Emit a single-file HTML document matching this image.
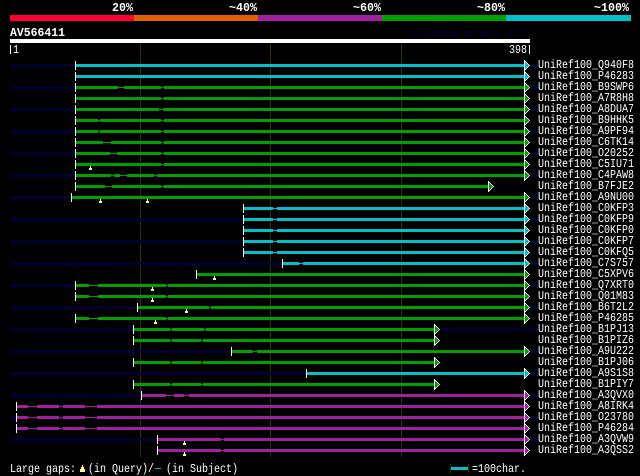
<!DOCTYPE html>
<html><head><meta charset="utf-8"><style>
html,body{margin:0;padding:0;background:#000;width:640px;height:476px;overflow:hidden}
svg{display:block}
text{font-family:"Liberation Mono",monospace;font-size:12px;fill:#fff}
.b{font-weight:bold}
</style></head><body>
<svg width="640" height="476" viewBox="0 0 640 476" shape-rendering="crispEdges" xmlns="http://www.w3.org/2000/svg">
<defs>
<rect id="t" x="0" y="-3" width="1" height="9" fill="#fff"/>
<g id="m"><rect x="1" y="3" width="1" height="2" fill="#ffff80"/><rect x="0" y="5" width="3" height="2" fill="#ffff80"/></g>
<g id="a">
<path fill="#fff" d="M0 -4h1v11h-1zM1 -3h1v1h-1zM1 5h1v1h-1zM2 -2h1v1h-1zM2 4h1v1h-1zM3 -1h1v1h-1zM3 3h1v1h-1zM4 0h1v1h-1zM4 2h1v1h-1zM5 1h1v1h-1z"/>
<path d="M1 -2h1v7h-1zM2 -1h1v5h-1zM3 0h1v3h-1zM4 1h1v1h-1z"/>
</g>
</defs>
<rect x="10" y="15" width="124" height="6" fill="#ff0033"/>
<rect x="134" y="15" width="124" height="6" fill="#e06000"/>
<rect x="258" y="15" width="124" height="6" fill="#a020a0"/>
<rect x="382" y="15" width="124" height="6" fill="#00a000"/>
<rect x="506" y="15" width="125" height="6" fill="#00c0c8"/>
<text class="b" x="112" y="11" textLength="21" lengthAdjust="spacingAndGlyphs">20%</text>
<text class="b" x="229" y="11" textLength="28" lengthAdjust="spacingAndGlyphs">~40%</text>
<text class="b" x="353" y="11" textLength="28" lengthAdjust="spacingAndGlyphs">~60%</text>
<text class="b" x="477" y="11" textLength="28" lengthAdjust="spacingAndGlyphs">~80%</text>
<text class="b" x="594" y="11" textLength="35" lengthAdjust="spacingAndGlyphs">~100%</text>
<text class="b" x="10" y="36" textLength="55" lengthAdjust="spacingAndGlyphs">AV566411</text>
<text x="414" y="37" textLength="115" lengthAdjust="spacingAndGlyphs" style="fill:#000033">AlignView.pm Beta rel.7</text>
<rect x="10" y="39" width="520" height="4" fill="#fff"/>
<rect x="10" y="45" width="1" height="9" fill="#fff"/>
<text x="13" y="53" textLength="6" lengthAdjust="spacingAndGlyphs">1</text>
<text x="509" y="53" textLength="18" lengthAdjust="spacingAndGlyphs">398</text>
<rect x="529" y="45" width="1" height="9" fill="#fff"/>
<rect x="140" y="44" width="1" height="413" fill="#333300"/>
<rect x="270" y="44" width="1" height="413" fill="#333300"/>
<rect x="401" y="44" width="1" height="413" fill="#333300"/>

<g shape-rendering="geometricPrecision">
<g fill="#000033">
<path d="M10 64h65v3h-65zM530 64h8v3h-8zM10 86h65v3h-65zM530 86h8v3h-8zM10 108h65v3h-65zM530 108h8v3h-8zM10 130h65v3h-65zM530 130h8v3h-8zM10 152h65v3h-65zM530 152h8v3h-8zM10 174h65v3h-65zM530 174h8v3h-8zM10 196h61v3h-61zM530 196h8v3h-8zM10 218h233v3h-233zM530 218h8v3h-8zM10 240h233v3h-233zM530 240h8v3h-8zM10 262h272v3h-272zM530 262h8v3h-8zM10 284h65v3h-65zM530 284h8v3h-8zM10 306h127v3h-127zM530 306h8v3h-8zM10 328h123v3h-123zM440 328h98v3h-98zM10 350h221v3h-221zM530 350h8v3h-8zM10 372h296v3h-296zM530 372h8v3h-8zM10 394h131v3h-131zM530 394h8v3h-8zM10 416h6v3h-6zM530 416h8v3h-8zM10 438h147v3h-147zM530 438h8v3h-8z"/>
</g>

<!-- cyan -->
<g fill="#00c0c8">
<path d="M76 64h448v3h-448zM76 75h448v3h-448z"/>
<path d="M244 207h29v3h-29zM273 208h4v1h-4zM277 207h247v3h-247zM244 218h29v3h-29zM273 219h4v1h-4zM277 218h247v3h-247zM244 229h29v3h-29zM273 230h4v1h-4zM277 229h247v3h-247zM244 240h29v3h-29zM273 241h4v1h-4zM277 240h247v3h-247zM244 251h29v3h-29zM273 252h4v1h-4zM277 251h247v3h-247z"/>
<path d="M283 262h16v3h-16zM299 263h4v1h-4zM303 262h221v3h-221zM307 372h217v3h-217z"/>
</g>
<!-- green -->
<g fill="#00a000">
<path d="M76 86h42v3h-42zM118 87h6v1h-6zM124 86h37v3h-37zM161 87h3v1h-3zM164 86h360v3h-360z"/>
<path d="M76 97h85v3h-85zM161 98h3v1h-3zM164 97h360v3h-360z"/>
<path d="M76 108h83v3h-83zM159 109h4v1h-4zM163 108h361v3h-361z"/>
<path d="M76 119h22v3h-22zM98 120h2v1h-2zM100 119h61v3h-61zM161 120h3v1h-3zM164 119h360v3h-360z"/>
<path d="M76 130h22v3h-22zM98 131h2v1h-2zM100 130h61v3h-61zM161 131h3v1h-3zM164 130h360v3h-360z"/>
<path d="M76 141h27v3h-27zM103 142h8v1h-8zM111 141h50v3h-50zM161 142h3v1h-3zM164 141h360v3h-360z"/>
<path d="M76 152h34v3h-34zM110 153h7v1h-7zM117 152h44v3h-44zM161 153h3v1h-3zM164 152h360v3h-360z"/>
<path d="M76 163h85v3h-85zM161 164h3v1h-3zM164 163h360v3h-360z"/>
<path d="M76 174h35v3h-35zM111 175h3v1h-3zM114 174h6v3h-6zM120 175h7v1h-7zM127 174h27v3h-27zM154 175h3v1h-3zM157 174h367v3h-367z"/>
<path d="M76 185h29v3h-29zM105 186h7v1h-7zM112 185h49v3h-49zM161 186h3v1h-3zM164 185h324v3h-324z"/>
<path d="M72 196h452v3h-452z"/>
<path d="M197 273h327v3h-327z"/>
<path d="M76 284h13v3h-13zM89 285h9v1h-9zM98 284h68v3h-68zM166 285h2v1h-2zM168 284h356v3h-356z"/>
<path d="M76 295h13v3h-13zM89 296h9v1h-9zM98 295h68v3h-68zM166 296h2v1h-2zM168 295h356v3h-356z"/>
<path d="M138 306h71v3h-71zM209 307h2v1h-2zM211 306h313v3h-313z"/>
<path d="M76 317h13v3h-13zM89 318h9v1h-9zM98 317h68v3h-68zM166 318h2v1h-2zM168 317h356v3h-356z"/>
<path d="M134 328h36v3h-36zM170 329h2v1h-2zM172 328h32v3h-32zM204 329h2v1h-2zM206 328h228v3h-228z"/>
<path d="M134 339h36v3h-36zM170 340h2v1h-2zM172 339h29v3h-29zM201 340h2v1h-2zM203 339h231v3h-231z"/>
<path d="M232 350h21v3h-21zM253 351h4v1h-4zM257 350h267v3h-267z"/>
<path d="M134 361h36v3h-36zM170 362h2v1h-2zM172 361h29v3h-29zM201 362h2v1h-2zM203 361h231v3h-231z"/>
<path d="M134 383h36v3h-36zM170 384h2v1h-2zM172 383h29v3h-29zM201 384h2v1h-2zM203 383h231v3h-231z"/>
</g>
<!-- magenta -->
<g fill="#a020a0">
<path d="M142 394h24v3h-24zM166 395h8v1h-8zM174 394h10v3h-10zM184 395h5v1h-5zM189 394h335v3h-335z"/>
<path d="M17 405h11v3h-11zM28 406h9v1h-9zM37 405h22v3h-22zM59 406h4v1h-4zM63 405h22v3h-22zM85 406h12v1h-12zM97 405h427v3h-427z"/>
<path d="M17 416h11v3h-11zM28 417h9v1h-9zM37 416h22v3h-22zM59 417h4v1h-4zM63 416h22v3h-22zM85 417h12v1h-12zM97 416h427v3h-427z"/>
<path d="M17 427h11v3h-11zM28 428h9v1h-9zM37 427h22v3h-22zM59 428h4v1h-4zM63 427h22v3h-22zM85 428h12v1h-12zM97 427h427v3h-427z"/>
<path d="M158 438h63v3h-63zM221 439h3v1h-3zM224 438h300v3h-300z"/>
<path d="M158 449h63v3h-63zM221 450h3v1h-3zM224 449h300v3h-300z"/>
</g>
</g>

<!-- ticks -->
<use href="#t" x="75" y="64"/><use href="#t" x="75" y="75"/><use href="#t" x="75" y="86"/><use href="#t" x="75" y="97"/><use href="#t" x="75" y="108"/><use href="#t" x="75" y="119"/><use href="#t" x="75" y="130"/><use href="#t" x="75" y="141"/><use href="#t" x="75" y="152"/><use href="#t" x="75" y="163"/><use href="#t" x="75" y="174"/><use href="#t" x="75" y="185"/>
<use href="#t" x="71" y="196"/>
<use href="#t" x="243" y="207"/><use href="#t" x="243" y="218"/><use href="#t" x="243" y="229"/><use href="#t" x="243" y="240"/><use href="#t" x="243" y="251"/>
<use href="#t" x="282" y="262"/><use href="#t" x="196" y="273"/><use href="#t" x="75" y="284"/><use href="#t" x="75" y="295"/><use href="#t" x="137" y="306"/><use href="#t" x="75" y="317"/>
<use href="#t" x="133" y="328"/><use href="#t" x="133" y="339"/><use href="#t" x="231" y="350"/><use href="#t" x="133" y="361"/><use href="#t" x="306" y="372"/><use href="#t" x="133" y="383"/>
<use href="#t" x="141" y="394"/><use href="#t" x="16" y="405"/><use href="#t" x="16" y="416"/><use href="#t" x="16" y="427"/><use href="#t" x="157" y="438"/><use href="#t" x="157" y="449"/>

<!-- markers -->
<use href="#m" x="89" y="163"/><use href="#m" x="99" y="196"/><use href="#m" x="146" y="196"/><use href="#m" x="213" y="273"/><use href="#m" x="151" y="284"/><use href="#m" x="151" y="295"/><use href="#m" x="185" y="306"/><use href="#m" x="154" y="317"/><use href="#m" x="183" y="438"/><use href="#m" x="183" y="449"/>

<!-- arrows -->
<g fill="#00c0c8">
<use href="#a" x="524" y="64"/><use href="#a" x="524" y="75"/><use href="#a" x="524" y="207"/><use href="#a" x="524" y="218"/><use href="#a" x="524" y="229"/><use href="#a" x="524" y="240"/><use href="#a" x="524" y="251"/><use href="#a" x="524" y="262"/><use href="#a" x="524" y="372"/>
</g>
<g fill="#00a000">
<use href="#a" x="524" y="86"/><use href="#a" x="524" y="97"/><use href="#a" x="524" y="108"/><use href="#a" x="524" y="119"/><use href="#a" x="524" y="130"/><use href="#a" x="524" y="141"/><use href="#a" x="524" y="152"/><use href="#a" x="524" y="163"/><use href="#a" x="524" y="174"/><use href="#a" x="488" y="185"/><use href="#a" x="524" y="196"/><use href="#a" x="524" y="273"/><use href="#a" x="524" y="284"/><use href="#a" x="524" y="295"/><use href="#a" x="524" y="306"/><use href="#a" x="524" y="317"/><use href="#a" x="434" y="328"/><use href="#a" x="434" y="339"/><use href="#a" x="524" y="350"/><use href="#a" x="434" y="361"/><use href="#a" x="434" y="383"/>
</g>
<g fill="#a020a0">
<use href="#a" x="524" y="394"/><use href="#a" x="524" y="405"/><use href="#a" x="524" y="416"/><use href="#a" x="524" y="427"/><use href="#a" x="524" y="438"/><use href="#a" x="524" y="449"/>
</g>

<!-- labels -->
<g text-rendering="geometricPrecision">
<text x="538" y="68" textLength="96" lengthAdjust="spacingAndGlyphs">UniRef100_Q940F8</text>
<text x="538" y="79" textLength="96" lengthAdjust="spacingAndGlyphs">UniRef100_P46283</text>
<text x="538" y="90" textLength="96" lengthAdjust="spacingAndGlyphs">UniRef100_B9SWP6</text>
<text x="538" y="101" textLength="96" lengthAdjust="spacingAndGlyphs">UniRef100_A7R8H8</text>
<text x="538" y="112" textLength="96" lengthAdjust="spacingAndGlyphs">UniRef100_A8DUA7</text>
<text x="538" y="123" textLength="96" lengthAdjust="spacingAndGlyphs">UniRef100_B9HHK5</text>
<text x="538" y="134" textLength="96" lengthAdjust="spacingAndGlyphs">UniRef100_A9PF94</text>
<text x="538" y="145" textLength="96" lengthAdjust="spacingAndGlyphs">UniRef100_C6TK14</text>
<text x="538" y="156" textLength="96" lengthAdjust="spacingAndGlyphs">UniRef100_O20252</text>
<text x="538" y="167" textLength="96" lengthAdjust="spacingAndGlyphs">UniRef100_C5IU71</text>
<text x="538" y="178" textLength="96" lengthAdjust="spacingAndGlyphs">UniRef100_C4PAW8</text>
<text x="538" y="189" textLength="96" lengthAdjust="spacingAndGlyphs">UniRef100_B7FJE2</text>
<text x="538" y="200" textLength="96" lengthAdjust="spacingAndGlyphs">UniRef100_A9NU00</text>
<text x="538" y="211" textLength="96" lengthAdjust="spacingAndGlyphs">UniRef100_C0KFP3</text>
<text x="538" y="222" textLength="96" lengthAdjust="spacingAndGlyphs">UniRef100_C0KFP9</text>
<text x="538" y="233" textLength="96" lengthAdjust="spacingAndGlyphs">UniRef100_C0KFP0</text>
<text x="538" y="244" textLength="96" lengthAdjust="spacingAndGlyphs">UniRef100_C0KFP7</text>
<text x="538" y="255" textLength="96" lengthAdjust="spacingAndGlyphs">UniRef100_C0KFQ5</text>
<text x="538" y="266" textLength="96" lengthAdjust="spacingAndGlyphs">UniRef100_C7S757</text>
<text x="538" y="277" textLength="96" lengthAdjust="spacingAndGlyphs">UniRef100_C5XPV6</text>
<text x="538" y="288" textLength="96" lengthAdjust="spacingAndGlyphs">UniRef100_Q7XRT0</text>
<text x="538" y="299" textLength="96" lengthAdjust="spacingAndGlyphs">UniRef100_Q01M83</text>
<text x="538" y="310" textLength="96" lengthAdjust="spacingAndGlyphs">UniRef100_B6T2L2</text>
<text x="538" y="321" textLength="96" lengthAdjust="spacingAndGlyphs">UniRef100_P46285</text>
<text x="538" y="332" textLength="96" lengthAdjust="spacingAndGlyphs">UniRef100_B1PJ13</text>
<text x="538" y="343" textLength="96" lengthAdjust="spacingAndGlyphs">UniRef100_B1PIZ6</text>
<text x="538" y="354" textLength="96" lengthAdjust="spacingAndGlyphs">UniRef100_A9U222</text>
<text x="538" y="365" textLength="96" lengthAdjust="spacingAndGlyphs">UniRef100_B1PJ06</text>
<text x="538" y="376" textLength="96" lengthAdjust="spacingAndGlyphs">UniRef100_A9S1S8</text>
<text x="538" y="387" textLength="96" lengthAdjust="spacingAndGlyphs">UniRef100_B1PIY7</text>
<text x="538" y="398" textLength="96" lengthAdjust="spacingAndGlyphs">UniRef100_A3QVX0</text>
<text x="538" y="409" textLength="96" lengthAdjust="spacingAndGlyphs">UniRef100_A8IRK4</text>
<text x="538" y="420" textLength="96" lengthAdjust="spacingAndGlyphs">UniRef100_O23780</text>
<text x="538" y="431" textLength="96" lengthAdjust="spacingAndGlyphs">UniRef100_P46284</text>
<text x="538" y="442" textLength="96" lengthAdjust="spacingAndGlyphs">UniRef100_A3QVW9</text>
<text x="538" y="453" textLength="96" lengthAdjust="spacingAndGlyphs">UniRef100_A3QSS2</text>
</g>

<!-- footer -->
<text x="10" y="472" textLength="66" lengthAdjust="spacingAndGlyphs">Large gaps:</text>
<rect x="82" y="465" width="1" height="2" fill="#ffff80"/><rect x="81" y="467" width="3" height="2" fill="#ffff80"/><rect x="80" y="469" width="5" height="3" fill="#ffff80"/>
<text x="88" y="472" textLength="66" lengthAdjust="spacingAndGlyphs">(in Query)/</text>
<rect x="155" y="468" width="6" height="1" fill="#00c0c8"/>
<text x="166" y="472" textLength="72" lengthAdjust="spacingAndGlyphs">(in Subject)</text>
<rect x="450" y="464" width="1" height="9" fill="#333300"/><rect x="468" y="464" width="1" height="9" fill="#333300"/>
<rect x="451" y="467" width="17" height="3" fill="#00c0c8"/>
<text x="472" y="472" textLength="54" lengthAdjust="spacingAndGlyphs">=100char.</text>
</svg>
</body></html>
